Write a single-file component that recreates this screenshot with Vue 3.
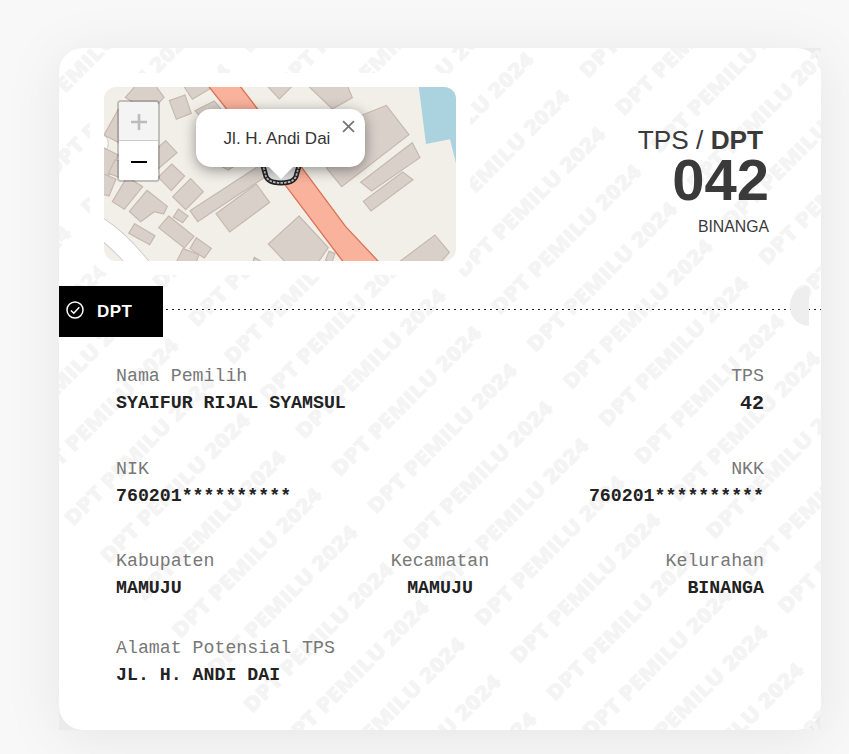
<script setup>
const marks = []
for (let column = -1; column < 7; column++) {
  for (let row = -16; row < 24; row++) {
    const x = 14 + column * 159.7 + row * 35.8
    const y = 479 - column * 161.7 + row * 37.4
    if (x > -135 && x < 758 && y > 4 && y < 820 && y - x < 690) {
      marks.push({ x: x.toFixed(1), y: y.toFixed(1) })
    }
  }
}

const buildings = [
  '91,52 122,17 178,12 207,52 181,81 135,81',
  '262,12 340,12 345,26 292,58',
  '223,62 270,45 289,100 244,118',
  '300,92 358,63 380,90 330,125',
  '27,165 70,88 120,110 75,190',
  '20,200 70,225 40,290 10,280',
  '22,280 63,297 42,348 12,340',
  '60,240 120,250 95,300 40,280',
  '97,290 143,320 88,388 52,365',
  '212,182 246,218 190,266 160,230',
  '230,252 269,288 229,332 190,292',
  '287,296 325,335 272,389 233,350',
  '156,331 217,379 206,402 178,395 137,425 103,394',
  '250,387 279,408 263,428 235,411',
  '285,392 500,252 512,290 308,425',
  '363,401 484,312 524,367 404,456',
  '360,250 400,270 430,250 400,230',
  '119,431 180,467 164,494 101,460',
  '221,408 297,469 268,504 191,443',
  '304,473 349,505 328,534 285,506',
  '264,506 312,524 300,555 240,555',
  '612,408 700,503 660,560 570,545 520,492',
  '702,514 720,520 710,550 692,540',
  '478,532 500,545 470,555',
  '500,0 610,0 553,57',
  '640,18 750,0 772,53 712,87',
  '690,150 874,76 942,164 740,320 695,265',
  '952,188 975,233 830,333 797,307',
  '923,276 954,299 828,393 805,364',
  '1020,465 1063,517 1030,555 900,555',
]

const rows = [
  [
    { label: 'Nama Pemilih', value: 'SYAIFUR RIJAL SYAMSUL' },
    { label: 'TPS', value: '42', large: true },
  ],
  [
    { label: 'NIK', value: '760201**********' },
    { label: 'NKK', value: '760201**********' },
  ],
  [
    { label: 'Kabupaten', value: 'MAMUJU' },
    { label: 'Kecamatan', value: 'MAMUJU' },
    { label: 'Kelurahan', value: 'BINANGA' },
  ],
  [{ label: 'Alamat Potensial TPS', value: 'JL. H. ANDI DAI' }],
]
</script>

<template>
  <main class="page">
    <article class="card">
      <svg class="watermark" viewBox="0 0 762 682" aria-hidden="true">
        <path class="corner" d="M738 0H762V24A24 24 0 0 0 738 0ZM762 658V682H738A24 24 0 0 0 762 658ZM0 658V682H24A24 24 0 0 1 0 658Z" />
        <text
          v-for="(m, i) in marks"
          :key="i"
          :transform="`translate(${m.x} ${m.y}) rotate(-45)`"
          textLength="202"
          lengthAdjust="spacingAndGlyphs"
        >DPT PEMILU 2024</text>
      </svg>

      <header class="top">
        <div class="map">
          <svg class="tiles" viewBox="27 21 1056 522" aria-hidden="true">
            <rect x="27" y="21" width="1056" height="522" fill="#f2efe9" />
            <path d="M10 160Q40 165 40 190T10 225" fill="#fff" stroke="#c9c9cb" stroke-width="3" />
            <path d="M10 440Q75 480 145 570" fill="none" stroke="#c9c9cb" stroke-width="61" />
            <path d="M10 440Q75 480 145 570" fill="none" stroke="#fff" stroke-width="56" />
            <polygon v-for="b in buildings" :key="b" :points="b" class="building" />
            <path d="M970 10L993 192 1065 178 1083 250V10Z" fill="#aad3df" />
            <path d="M318 -10L470 182 742 542 790 600 890 590 848 542 752 440 620 262 490 90 425 5Z" fill="#f9b29c" stroke="#dc7253" stroke-width="4" />
          </svg>
          <svg class="marker" viewBox="0 0 46 46" aria-hidden="true">
            <path d="M3 22L6.500 35Q9 40 15 41.500Q23 43.500 31 41.500Q37 40 39.500 35L43 22Z" fill="#ddd" />
            <path d="M4.500 22L8 34.500Q10 39 16 40.200Q23 41.700 30 40.200Q36 39 38 34.500L41.500 22" fill="none" stroke="#222" stroke-width="5" />
            <path d="M4.500 22L8 34.500Q10 39 16 40.200Q23 41.700 30 40.200Q36 39 38 34.500L41.500 22" fill="none" stroke="#bbb" stroke-width="1.800" stroke-dasharray="2.500 1.200" />
          </svg>
          <div class="popup">
            <span>Jl. H. Andi Dai</span>
            <svg class="close" viewBox="0 0 12 12"><path d="M1 1L11 11M11 1L1 11" /></svg>
          </div>
          <div class="zoom">
            <button class="off"><svg viewBox="0 0 18 18"><path d="M1 9H17M9 1V17" /></svg></button>
            <button><svg viewBox="0 0 18 18"><path d="M1 9H17" /></svg></button>
          </div>
        </div>
        <div class="station">
          <div class="kind">TPS / <b>DPT</b></div>
          <div class="number">042</div>
          <div class="village">BINANGA</div>
        </div>
      </header>

      <div class="divider">
        <div class="badge">
          <svg viewBox="0 0 18 18"><circle cx="9" cy="9" r="8" /><path d="M4.900 9.500L7.800 12.200 13.300 6.300" /></svg>
          <span>DPT</span>
        </div>
        <div class="dots"></div>
        <div class="notch"></div>
      </div>

      <section class="details">
        <div v-for="(row, i) in rows" :key="i" class="row">
          <div v-for="f in row" :key="f.label" class="field">
            <div class="label">{{ f.label }}</div>
            <div class="value" :class="{ large: f.large }">{{ f.value }}</div>
          </div>
        </div>
      </section>
    </article>
  </main>
</template>

<style>
body {
  background: #f8f8f8;
}
</style>

<style scoped>
.page {
  box-sizing: border-box;
  height: 754px;
  padding: 48px 28px 24px 59px;
  overflow: hidden;
  background: #f8f8f8;
  font-family: "Liberation Sans", Arial, sans-serif;
  color: #3a3a3a;
}
.card {
  position: relative;
  height: 682px;
  border-radius: 24px;
  background: #fff;
  box-shadow: 0 8px 60px rgba(0, 0, 0, 0.08);
}
.watermark {
  position: absolute;
  inset: 0;
  width: 762px;
  height: 682px;
  overflow: hidden;
}
.watermark text {
  font: 800 20.500px "Open Sans", sans-serif;
  fill: #f4f4f4;
  stroke: #f4f4f4;
  stroke-width: 0.400;
}
.corner {
  fill: #ebebeb;
}
.top {
  position: relative;
  display: flex;
  justify-content: space-between;
  height: 238px;
  box-sizing: border-box;
  padding: 39px 52px 0 45px;
}
.map {
  position: relative;
  width: 352px;
  height: 174px;
  border-radius: 12px;
  box-shadow: 0 0 0 14px #fff;
}
.tiles {
  display: block;
  width: 352px;
  height: 174px;
  border-radius: 12px;
}
.building {
  fill: #d9d0c9;
  stroke: #c6b8ad;
  stroke-width: 3.500;
}
.marker {
  position: absolute;
  left: 154px;
  top: 55px;
  width: 46px;
  height: 46px;
}
.popup {
  position: absolute;
  left: 92px;
  top: 22px;
  width: 169px;
  height: 58px;
  display: flex;
  align-items: center;
  justify-content: center;
  box-sizing: border-box;
  padding: 1px 7px 0 0;
  border-radius: 15px;
  background: #fff;
  box-shadow: 0 3px 14px rgba(0, 0, 0, 0.4);
  font-size: 17px;
  color: #333;
}
.popup::after {
  content: "";
  position: absolute;
  left: 72px;
  top: 57px;
  border: 13px solid transparent;
  border-top-color: #fff;
  border-bottom: 0;
}
.close {
  position: absolute;
  right: 10px;
  top: 11px;
  width: 13px;
  height: 13px;
  fill: none;
  stroke: #757575;
  stroke-width: 1.600;
}
.zoom {
  position: absolute;
  left: 13px;
  top: 13px;
  border: 2px solid rgba(0, 0, 0, 0.2);
  border-radius: 4px;
  background-clip: padding-box;
}
.zoom button {
  display: flex;
  align-items: center;
  justify-content: center;
  width: 39px;
  height: 39px;
  padding: 0;
  border: 0;
  background: #fff;
  border-radius: 0 0 2px 2px;
}
.zoom .off {
  border-bottom: 1px solid #ccc;
  background: #f4f4f4;
  border-radius: 2px 2px 0 0;
}
.zoom svg {
  width: 18px;
  height: 18px;
  margin-top: 2px;
  fill: none;
  stroke: #000;
  stroke-width: 2;
}
.zoom .off svg {
  stroke: #bbb;
  stroke-width: 2.600;
}
.station {
  display: flex;
  flex-direction: column;
  align-items: flex-end;
  padding-top: 37px;
}
.kind {
  margin-right: 6px;
  font-size: 26.200px;
  line-height: 32px;
}
.number {
  margin-right: 0;
  font-size: 58px;
  font-weight: bold;
  line-height: 48px;
}
.village {
  margin-top: 13px;
  font-size: 15.800px;
  line-height: 20px;
}
.divider {
  position: relative;
  display: flex;
  height: 51px;
}
.badge {
  display: flex;
  align-items: center;
  gap: 13px;
  box-sizing: border-box;
  width: 104px;
  padding-left: 7px;
  background: #000;
  color: #fff;
  font-size: 17px;
  font-weight: bold;
  letter-spacing: 0.400px;
}
.badge svg {
  width: 18px;
  height: 18px;
  margin-top: -3px;
  fill: none;
  stroke: #fff;
  stroke-width: 1.500;
}
.dots {
  flex: 1;
  height: 1px;
  margin: 23px 0 0 3px;
  background: repeating-linear-gradient(90deg, #222 0 2px, transparent 2px 6px);
}
.notch {
  position: absolute;
  right: 12px;
  top: 0;
  width: 19px;
  height: 40px;
  border-radius: 20px 0 0 20px;
  background: #eee;
}
.details {
  position: relative;
  display: flex;
  flex-direction: column;
  padding: 26px 57px 0 57px;
  font-family: "Courier New", "Liberation Mono", monospace;
  font-size: 18.240px;
}
.row {
  display: grid;
  grid-template-columns: 1fr 1fr;
  height: 92.500px;
}
.row:nth-child(3) {
  grid-template-columns: 1fr 1fr 1fr;
  height: 87px;
}
.row:last-child {
  height: 60px;
}
.field:last-child:not(:first-child) {
  text-align: right;
}
.field:nth-child(2):not(:last-child) {
  text-align: center;
}
.label {
  color: #777;
  line-height: 27px;
}
.value {
  color: #222;
  font-weight: bold;
  line-height: 27px;
}
.large {
  font-size: 20px;
}
</style>
